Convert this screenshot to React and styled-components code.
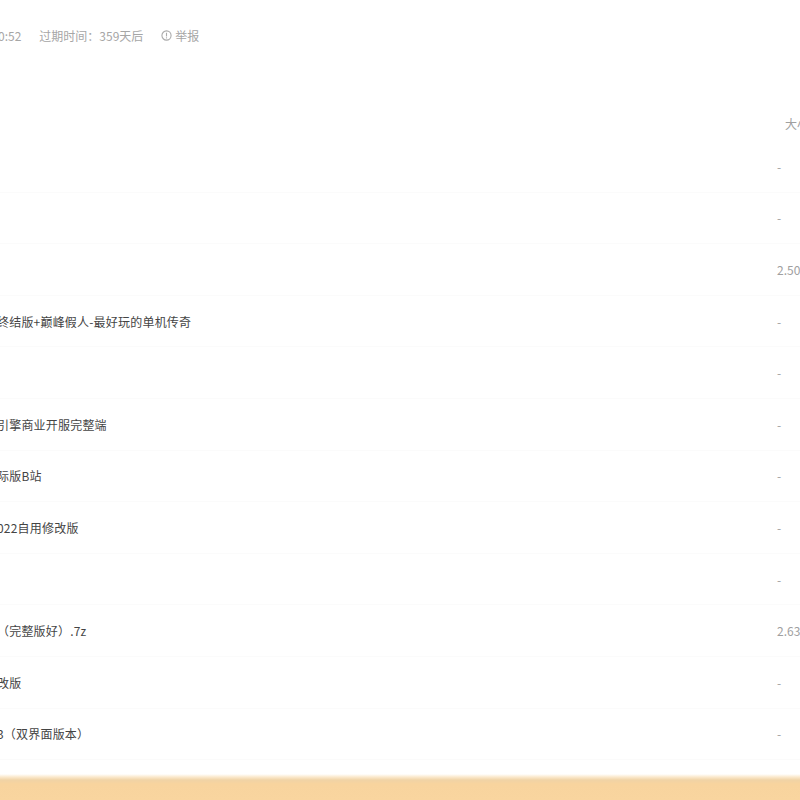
import React from "react";
import styled, { createGlobalStyle } from "styled-components";

const GlobalStyle = createGlobalStyle`
  html, body {
    margin: 0;
    padding: 0;
    background: #ffffff;
  }
  body {
    font-family: "Noto Sans CJK SC", "Liberation Sans", sans-serif;
    overflow: hidden;
  }
`;

const files = [
  { name: "", size: "-" },
  { name: "", size: "-" },
  { name: "", size: "2.50G" },
  { name: "终结版+巅峰假人-最好玩的单机传奇", size: "-", cut: true },
  { name: "", size: "-" },
  { name: "引擎商业开服完整端", size: "-", cut: true },
  { name: "际版B站", size: "-", cut: true },
  { name: "022自用修改版", size: "-", cut: true },
  { name: "", size: "-" },
  { name: "（完整版好）.7z", size: "2.63G", cut: true },
  { name: "改版", size: "-", cut: true },
  { name: "3（双界面版本）", size: "-", cut: true },
];

class App extends React.Component {
  render() {
    return (
      <Page>
        <GlobalStyle />
        <Meta>
          <MetaItem cut>0:52</MetaItem>
          <MetaItem>过期时间：359天后</MetaItem>
          <Report>
            <svg width="11" height="11" viewBox="0 0 12 12">
              <circle cx="6" cy="6" r="5" fill="none" stroke="#aaa" strokeWidth="1.2" />
              <rect x="5.4" y="3" width="1.2" height="4" fill="#aaa" />
              <rect x="5.4" y="8" width="1.2" height="1.2" fill="#aaa" />
            </svg>
            举报
          </Report>
        </Meta>
        <Table>
          <HeadRow>
            <Cell />
            <SizeCell>大小</SizeCell>
          </HeadRow>
          {files.map((f, i) => (
            <Row key={i}>
              <Name cut={f.cut}>{f.name}</Name>
              <SizeCell>{f.size}</SizeCell>
            </Row>
          ))}
        </Table>
        <Footer />
      </Page>
    );
  }
}

const Page = styled.div`
  width: 800px;
  height: 800px;
  display: flex;
  flex-direction: column;
  overflow: hidden;
  position: relative;
`;

const Meta = styled.div`
  height: 70px;
  display: flex;
  align-items: center;
  gap: 18px;
  font-size: 12px;
  color: #a6a6a6;
`;

const MetaItem = styled.span`
  margin-left: ${props => (props.cut ? "-2px" : "0")};
`;

const Report = styled.span`
  display: flex;
  align-items: center;
  gap: 3px;
`;

const Table = styled.div`
  flex: 1;
  display: flex;
  flex-direction: column;
  padding-top: 35px;
`;

const HeadRow = styled.div`
  display: grid;
  grid-template-columns: 785px 100px;
  height: 36px;
  align-items: center;
  font-size: 12px;
  color: #999;
`;

const Row = styled.div`
  display: grid;
  grid-template-columns: 777px 100px;
  height: 51.6px;
  align-items: center;
  border-bottom: 1px solid #fbfbfb;
  box-sizing: border-box;
`;

const Cell = styled.span``;

const Name = styled.span`
  font-size: 12px;
  color: #444;
  letter-spacing: 0.2px;
  white-space: nowrap;
  margin-left: ${props => (props.cut ? "-3px" : "0")};
`;

const SizeCell = styled.span`
  font-size: 12px;
  color: #a0a0a0;
  white-space: nowrap;
`;

const Footer = styled.div`
  height: 26px;
  flex-shrink: 0;
  background: linear-gradient(to bottom, #ffffff 0px, #fbe9cc 3px, #f0d3a6 6px, #f8d49e 10px, #f9d59f 100%);
`;

export default App;
